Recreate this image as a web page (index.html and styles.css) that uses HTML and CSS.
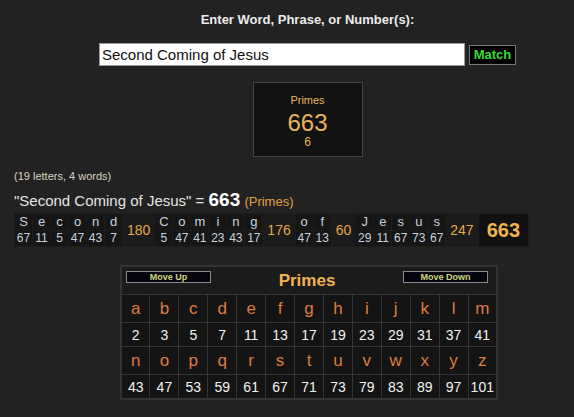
FILE: index.html
```html
<!DOCTYPE html>
<html>
<head>
<meta charset="utf-8">
<link rel="stylesheet" href="styles.css">
</head>
<body>
<div class="top">
  <div class="heading">Enter Word, Phrase, or Number(s):</div>
  <div class="entry">
    <div class="input">Second Coming of Jesus</div>
    <div class="match">Match</div>
  </div>
  <div class="scorebox">
    <div class="sb-name">Primes</div>
    <div class="sb-val">663</div>
    <div class="sb-sub">6</div>
  </div>
</div>
<div class="count">(19 letters, 4 words)</div>
<div class="result">"Second Coming of Jesus" = <b class="res-num">663</b> <span class="res-name">(Primes)</span></div>
<table class="breakdown">
  <tr class="lt">
    <td>S</td><td>e</td><td>c</td><td>o</td><td>n</td><td>d</td><td class="wt" rowspan="2">180</td>
    <td>C</td><td>o</td><td>m</td><td>i</td><td>n</td><td>g</td><td class="wt" rowspan="2">176</td>
    <td>o</td><td>f</td><td class="wt" rowspan="2">60</td>
    <td>J</td><td>e</td><td>s</td><td>u</td><td>s</td><td class="wt" rowspan="2">247</td>
    <td class="tot" rowspan="2">663</td>
  </tr>
  <tr class="nm">
    <td>67</td><td>11</td><td>5</td><td>47</td><td>43</td><td>7</td>
    <td>5</td><td>47</td><td>41</td><td>23</td><td>43</td><td>17</td>
    <td>47</td><td>13</td>
    <td>29</td><td>11</td><td>67</td><td>73</td><td>67</td>
  </tr>
</table>
<div class="chartwrap">
<table class="chart">
  <tr class="hdr">
    <td colspan="13">
      <div class="hdr-row">
        <span class="btn">Move Up</span>
        <span class="ch-title">Primes</span>
        <span class="btn">Move Down</span>
      </div>
    </td>
  </tr>
  <tr class="letters"><td>a</td><td>b</td><td>c</td><td>d</td><td>e</td><td>f</td><td>g</td><td>h</td><td>i</td><td>j</td><td>k</td><td>l</td><td>m</td></tr>
  <tr class="nums"><td>2</td><td>3</td><td>5</td><td>7</td><td>11</td><td>13</td><td>17</td><td>19</td><td>23</td><td>29</td><td>31</td><td>37</td><td>41</td></tr>
  <tr class="letters"><td>n</td><td>o</td><td>p</td><td>q</td><td>r</td><td>s</td><td>t</td><td>u</td><td>v</td><td>w</td><td>x</td><td>y</td><td>z</td></tr>
  <tr class="nums"><td>43</td><td>47</td><td>53</td><td>59</td><td>61</td><td>67</td><td>71</td><td>73</td><td>79</td><td>83</td><td>89</td><td>97</td><td>101</td></tr>
</table>
</div>
</body>
</html>
```
FILE: styles.css
```css
html, body {
  margin: 0;
  padding: 0;
  background: #222222;
  font-family: "Liberation Sans", Arial, sans-serif;
  color: #dddddd;
}
body {
  width: 574px;
  height: 417px;
  overflow: hidden;
}
.top {
  margin-left: 99px;
  width: 417px;
  display: flex;
  flex-direction: column;
  align-items: center;
}
.heading {
  margin-top: 12px;
  font-size: 13px;
  font-weight: bold;
  color: #ececec;
  line-height: 16px;
}
.entry {
  margin-top: 15px;
  display: flex;
  align-items: center;
  gap: 4px;
  width: 417px;
}
.input {
  width: 362px;
  height: 21px;
  background: #ffffff;
  border: 1px solid #9a9a9a;
  color: #111;
  font-size: 15px;
  line-height: 21px;
  padding-left: 2px;
  box-sizing: content-box;
}
.match {
  width: 45px;
  height: 18px;
  background: #000;
  border: 1px solid #777;
  color: #33dd33;
  font-weight: bold;
  font-size: 13px;
  line-height: 18px;
  text-align: center;
}
.scorebox {
  margin-top: 16px;
  width: 108px;
  height: 73px;
  background: #121212;
  border: 1px solid #444;
  display: flex;
  flex-direction: column;
  align-items: center;
  color: #e9b35c;
}
.sb-name {
  margin-top: 11px;
  font-size: 11px;
  line-height: 13px;
}
.sb-val {
  margin-top: 2px;
  font-size: 24px;
  line-height: 27px;
}
.sb-sub {
  font-size: 12px;
  line-height: 13px;
}
.count {
  margin-top: 12px;
  margin-left: 14px;
  font-size: 11px;
  line-height: 14px;
  color: #d9d2c4;
}
.result {
  margin-top: 8px;
  margin-left: 14px;
  font-size: 15px;
  line-height: 18px;
  color: #e4e4e4;
}
.res-num {
  font-size: 19px;
  color: #ffffff;
}
.res-name {
  font-size: 13px;
  color: #e0a040;
}
.breakdown {
  margin-top: 2px;
  margin-left: 14px;
  border-collapse: separate;
  border-spacing: 1px;
  background: #1c1c1c;
}
.breakdown td {
  background: #161616;
  text-align: center;
  padding: 0 1.5px;
  min-width: 14px;
  color: #c6d2de;
}
.breakdown .lt td {
  font-size: 13px;
  height: 16px;
  line-height: 16px;
}
.breakdown .nm td {
  font-size: 12px;
  height: 15px;
  line-height: 15px;
}
.breakdown td.wt {
  font-size: 14px;
  color: #e5a744;
  padding: 0 4px;
  background: #1b1b1b;
}
.breakdown td.tot {
  font-size: 20px;
  font-weight: bold;
  color: #f0b34f;
  padding: 0 8px;
  background: #111111;
}
.chartwrap {
  margin-top: 18px;
  margin-left: 120px;
}
.chart {
  border-collapse: collapse;
  border: 2px solid #333;
  background: #141414;
  table-layout: fixed;
  width: 378px;
}
.chart td {
  border: 1px solid #363636;
  text-align: center;
  padding: 0;
}
.chart .hdr td {
  height: 27px;
  background: #1b1b1b;
}
.hdr-row {
  display: flex;
  justify-content: space-between;
  align-items: center;
  padding: 0 8px 0 4px;
}
.btn {
  width: 83px;
  height: 10px;
  background: #050510;
  border: 1px solid #8a8a8a;
  color: #cfd77a;
  font-size: 9px;
  font-weight: bold;
  line-height: 10px;
  text-align: center;
  margin-top: -8px;
}
.ch-title {
  font-size: 17px;
  font-weight: bold;
  color: #f1b34d;
  line-height: 20px;
}
.chart .letters td {
  height: 27px;
  font-size: 17px;
  color: #de7d3e;
}
.chart .nums td {
  height: 23px;
  font-size: 14px;
  color: #f2f2f2;
}
```
